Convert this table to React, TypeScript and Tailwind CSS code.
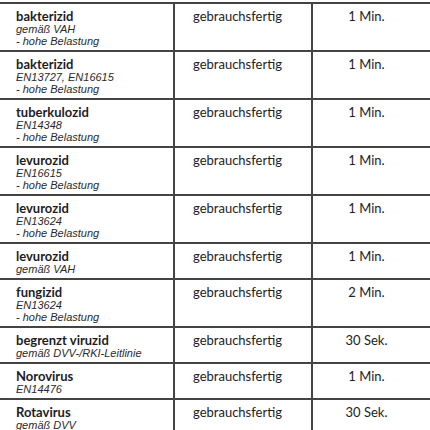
const rows = [
  { title: 'bakterizid', sub: ['gemäß VAH', '- hohe Belastung'], use: 'gebrauchsfertig', time: '1 Min.' },
  { title: 'bakterizid', sub: ['EN13727, EN16615', '- hohe Belastung'], use: 'gebrauchsfertig', time: '1 Min.' },
  { title: 'tuberkulozid', sub: ['EN14348', '- hohe Belastung'], use: 'gebrauchsfertig', time: '1 Min.' },
  { title: 'levurozid', sub: ['EN16615', '- hohe Belastung'], use: 'gebrauchsfertig', time: '1 Min.' },
  { title: 'levurozid', sub: ['EN13624', '- hohe Belastung'], use: 'gebrauchsfertig', time: '1 Min.' },
  { title: 'levurozid', sub: ['gemäß VAH'], use: 'gebrauchsfertig', time: '1 Min.' },
  { title: 'fungizid', sub: ['EN13624', '- hohe Belastung'], use: 'gebrauchsfertig', time: '2 Min.' },
  { title: 'begrenzt viruzid', sub: ['gemäß DVV-/RKI-Leitlinie'], use: 'gebrauchsfertig', time: '30 Sek.' },
  { title: 'Norovirus', sub: ['EN14476'], use: 'gebrauchsfertig', time: '1 Min.' },
  { title: 'Rotavirus', sub: ['gemäß DVV'], use: 'gebrauchsfertig', time: '30 Sek.' },
]

export default function App() {
  return (
    <div className="h-[430px] w-[430px] overflow-hidden bg-white">
      <div className="mt-[2px] border-t-2 border-[#444]">
        {rows.map((r, i) => (
          <div
            key={i}
            className={`flex border-b-2 border-[#444] ${r.sub.length > 1 ? 'h-[48px]' : 'h-[36px]'}`}
          >
            <div className="w-[175px] shrink-0 border-r-2 border-[#444] pl-[16px] pt-[6px]">
              <div className="font-['Lato',sans-serif] text-[13px] font-bold leading-[13px] text-[#1e1e1e]">
                {r.title}
              </div>
              {r.sub.map((s, j) => (
                <div
                  key={j}
                  className="font-['Liberation_Sans',Arial,sans-serif] text-[11px] italic leading-[12px] text-[#2a2a2a]"
                >
                  {s}
                </div>
              ))}
            </div>
            <div className="w-[138px] shrink-0 border-r-2 border-[#444] pl-[18px] pt-[6px] font-['Lato',sans-serif] text-[13px] leading-[13px] text-[#222]">
              {r.use}
            </div>
            <div className="flex-1 pr-[10px] pt-[6px] text-center font-['Lato',sans-serif] text-[13px] leading-[13px] text-[#222]">
              {r.time}
            </div>
          </div>
        ))}
      </div>
    </div>
  )
}
